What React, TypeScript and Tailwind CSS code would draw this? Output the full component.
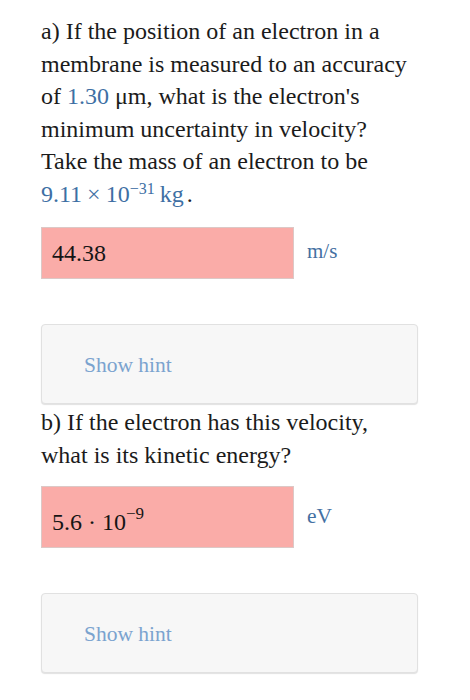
import React from "react";

const serif = { fontFamily: '"Liberation Serif", "Times New Roman", serif' };

function HintBox() {
  return (
    <div className="w-[377px] h-[80px] rounded-[4px] border border-[#e1e1e1] bg-[#f7f7f7] shadow-[0_1px_1px_rgba(0,0,0,0.12)] flex items-center pl-[42px]">
      <span className="text-[21.5px] text-[#7ba3cf] pt-[2px]">Show hint</span>
    </div>
  );
}

export default function App() {
  return (
    <div className="w-[470px] min-h-[700px] bg-white text-[#1b1b1b] pl-[41px]" style={serif}>
      {/* Part a */}
      <p className="pt-[15px] text-[24px] leading-[32.5px]">
        a) If the position of an electron in a
        <br />
        membrane is measured to an accuracy
        <br />
        of <span className="text-[#3e6fa4]">1.30</span> μm, what is the electron's
        <br />
        minimum uncertainty in velocity?
        <br />
        Take the mass of an electron to be
        <br />
        <span className="text-[#3e6fa4]">
          9.11<span className="mx-[5px]">×</span>10
          <span className="relative -top-[8px] text-[16px] leading-none">−31</span>
          <span className="ml-[5px]">kg</span>
        </span>
        <span className="ml-[3px]">.</span>
      </p>

      <div className="mt-[17px] flex items-start">
        <div className="w-[253px] h-[52px] bg-[#faaca8] border border-[#dcc8c6] pl-[10px] text-[24px] leading-[50px] text-[#151515]">
          44.38
        </div>
        <span className="ml-[13px] mt-[9px] text-[21px] leading-[30px] text-[#4470a2]">m/s</span>
      </div>

      <div className="mt-[45px]">
        <HintBox />
      </div>

      {/* Part b */}
      <p className="mt-[2px] text-[24px] leading-[32.5px]">
        b) If the electron has this velocity,
        <br />
        what is its kinetic energy?
      </p>

      <div className="mt-[15px] flex items-start">
        <div className="w-[253px] h-[62px] bg-[#faaca8] border border-[#dcc8c6] pl-[10px] pt-[10px] text-[24px] leading-[50px] text-[#151515]">
          5.6 · 10
          <span className="relative -top-[11px] text-[17px] leading-none">−9</span>
        </div>
        <span className="ml-[13px] mt-[15px] text-[21.5px] leading-[30px] text-[#4470a2]">eV</span>
      </div>

      <div className="mt-[45px]">
        <HintBox />
      </div>
    </div>
  );
}
